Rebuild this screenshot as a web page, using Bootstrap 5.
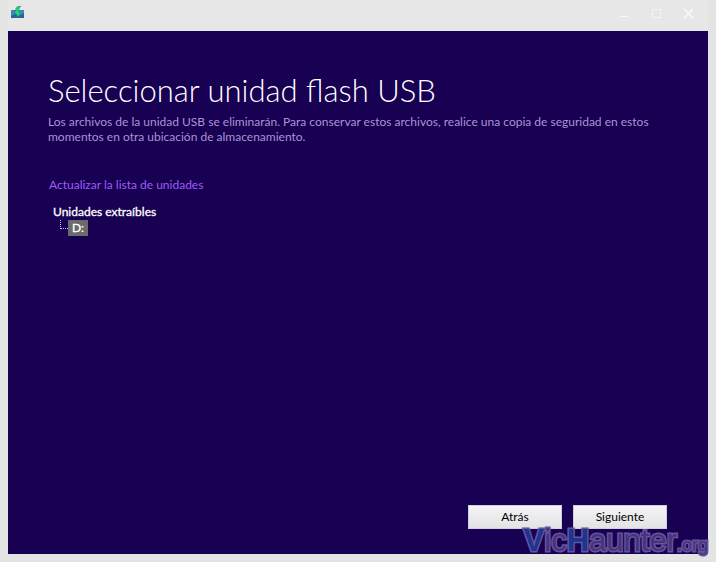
<!DOCTYPE html>
<html lang="es">
<head>
<meta charset="utf-8">
<meta name="viewport" content="width=device-width, initial-scale=1">
<title>Seleccionar unidad flash USB</title>
<link href="https://cdn.jsdelivr.net/npm/bootstrap@5.3.0/dist/css/bootstrap.min.css" rel="stylesheet">
<style>
body { background: #e5e4e5; font-family: Lato, "Open Sans", sans-serif; font-size: 12px; line-height: 15px; }
.frame { padding: 0 8px 8px; background: #e5e4e5; }
.titlebar { height: 31px; background: #e7e7e7; padding: 0 12px 5px 3px; }
.win-btn { width: 16px; height: 16px; color: #fafafa; }
.pane { background: #180052; padding: 38px 41px 25px 40px; }
.title { font-size: 31px; line-height: 42px; font-weight: 300; color: #fff; }
.intro { color: #ab94d2; margin-top: 3px; max-width: 620px; }
.refresh { color: #9f5cf8; margin-top: 33px; padding-left: 1px; }
.tree { color: #fff; margin-top: 12px; padding-left: 5px; line-height: 16px; -webkit-text-stroke: .3px #fff; }
.branch { width: 8px; height: 9px; margin-left: 7px; border-left: 1px dotted #c9c0dc; border-bottom: 1px dotted #c9c0dc; }
.drive { background: #6b6b6b; color: #fff; width: 20px; height: 16px; line-height: 16px; }
.wizard-actions { gap: 11px; }
.wiz-btn { width: 94px; height: 24px; font-size: 12px; line-height: 14px; color: #000; background: linear-gradient(#f4f3f5, #e3e2e5); border: 1px solid #d2cddd; }
.wiz-btn:hover { background: #fff; color: #000; }
.watermark { right: 8px; bottom: 1px; font: 31px/32px "Liberation Sans", Arial, sans-serif; color: #45337d; -webkit-text-stroke: 3px #66559a; paint-order: stroke fill; pointer-events: none; }
.watermark b { color: #1c3590; }
.watermark span { font-size: 18px; }
</style>
<script src="https://cdn.jsdelivr.net/npm/bootstrap@5.3.0/dist/js/bootstrap.bundle.min.js"></script>
</head>
<body>
<div class="frame position-relative min-vh-100 d-flex flex-column">
  <header class="titlebar d-flex align-items-center justify-content-between">
    <svg width="14" height="14" viewBox="0 0 14 14" aria-hidden="true">
      <path d="M0 4h13v8H0z" fill="#4586b5"/>
      <path d="M0 10l4-2 4 2 5-3v5H0z" fill="#2b6398"/>
      <path d="M10 0C6 0 4 2 5 5L3 5l4 6 3-5H8c-1-2 0-4 2-6z" fill="#20d487" stroke="#128c6b" stroke-width=".6"/>
    </svg>
    <div class="d-flex gap-3">
      <button type="button" class="win-btn btn p-0 border-0 d-flex" aria-label="Minimizar"><svg width="16" height="16" viewBox="0 0 16 16" fill="none" stroke="currentColor"><path d="M4 11.500h8"/></svg></button>
      <button type="button" class="win-btn btn p-0 border-0 d-flex" aria-label="Maximizar"><svg width="16" height="16" viewBox="0 0 16 16" fill="none" stroke="#f4f4f4"><path d="M4.500 4.500h8v8h-8z"/></svg></button>
      <button type="button" class="win-btn btn p-0 border-0 d-flex" aria-label="Cerrar"><svg width="16" height="16" viewBox="0 0 16 16" fill="none" stroke="currentColor" stroke-width="1.500"><path d="M4 4l9 9M13 4l-9 9"/></svg></button>
    </div>
  </header>
  <main class="pane flex-grow-1 d-flex flex-column">
    <h1 class="title mb-0">Seleccionar unidad flash USB</h1>
    <p class="intro mb-0">Los archivos de la unidad USB se eliminarán. Para conservar estos archivos, realice una copia de seguridad en estos momentos en otra ubicación de almacenamiento.</p>
    <a href="#" class="refresh align-self-start text-decoration-none">Actualizar la lista de unidades</a>
    <ul class="tree list-unstyled mb-0">
      <li>Unidades extraíbles
        <ul class="list-unstyled">
          <li class="d-flex"><span class="branch"></span><button type="button" class="drive border-0 p-0">D:</button></li>
        </ul>
      </li>
    </ul>
    <footer class="wizard-actions d-flex justify-content-end mt-auto">
      <button type="button" class="wiz-btn btn rounded-0 p-0">Atrás</button>
      <button type="button" class="wiz-btn btn rounded-0 p-0">Siguiente</button>
    </footer>
  </main>
  <div class="watermark position-absolute"><b>V</b>ic<b>H</b>aunter<span>.org</span></div>
</div>
</body>
</html>
